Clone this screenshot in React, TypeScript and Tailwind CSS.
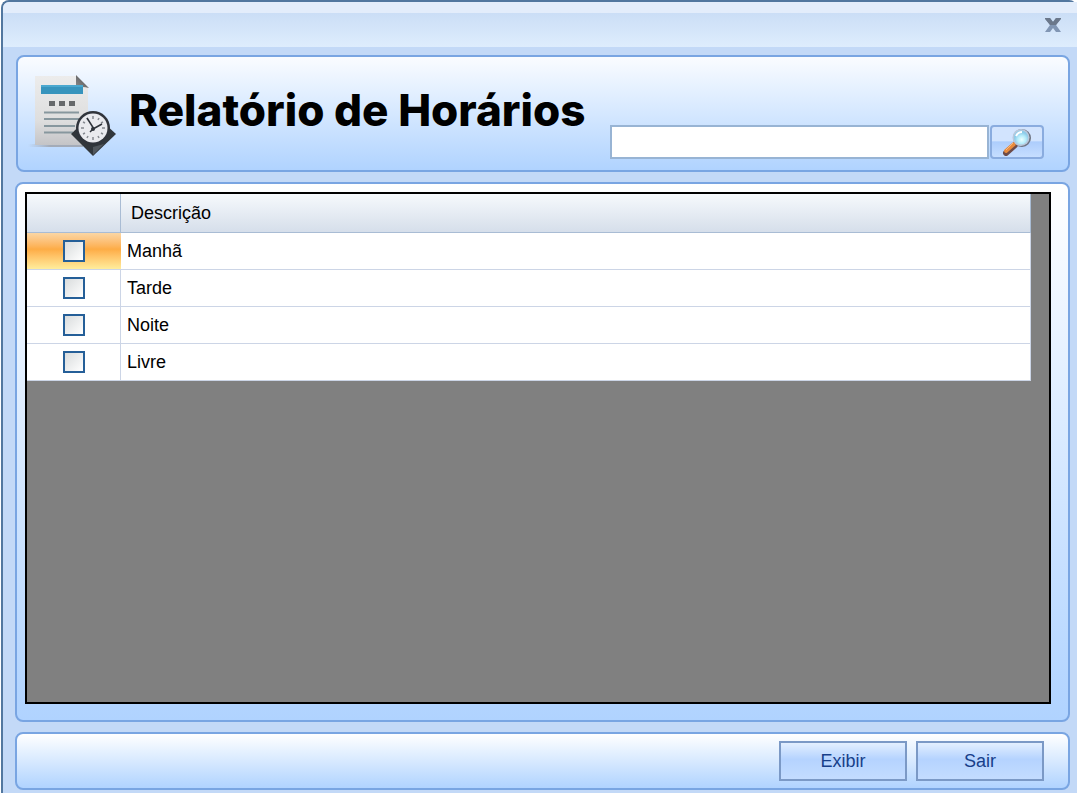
import { useState } from "react";

const schedules = ["Manhã", "Tarde", "Noite", "Livre"];

function ReportIcon() {
  return (
    <svg className="mt-1 h-[84px] w-[90px] shrink-0" viewBox="0 0 90 84" aria-hidden="true">
      <defs>
        <linearGradient id="paper" x1="0" y1="0" x2="0" y2="1">
          <stop offset="0" stopColor="#ececec" />
          <stop offset="0.65" stopColor="#dedede" />
          <stop offset="1" stopColor="#c4c4c7" />
        </linearGradient>
        <linearGradient id="floor" x1="0" y1="0" x2="1" y2="0">
          <stop offset="0" stopColor="#a9b3c2" stopOpacity="0" />
          <stop offset="0.4" stopColor="#a3abb8" />
        </linearGradient>
        <linearGradient id="fold" x1="0" y1="1" x2="1" y2="0">
          <stop offset="0" stopColor="#8b8b8b" />
          <stop offset="1" stopColor="#4b4b4e" />
        </linearGradient>
      </defs>
      <path d="M0 70h55v3H0z" fill="url(#floor)" />
      <path d="M7 2h42l11 12v57H7z" fill="url(#paper)" />
      <path d="M48 1l13 13q-7-2-13 0z" fill="url(#fold)" />
      <path d="M13 11h42v9H13z" fill="#3794bd" />
      <path d="M13 11h42v2H13z" fill="#4ba8cf" />
      <path d="M21 27h6v5h-6zM31 27h6v5h-6zM41 27h6v5h-6z" fill="#66696b" />
      <path d="M16 38.500h35M16 45h35M16 52h31M16 58.500h29" stroke="#87979e" strokeWidth="2" />
      <path d="M65 39l23 21-23 22-22-22z" fill="#31363b" />
      <path d="M65 73l11-3-11 11z" fill="#51575d" />
      <circle cx="65" cy="54" r="17" fill="#30343b" />
      <circle cx="65" cy="54" r="14.500" fill="#e9eaee" />
      <path
        d="M65 42v3M65 63v3M53 54h3M74 54h3M59 44l1 2M71 44l-1 2M55 48l2 1M75 48l-2 1M55 60l2-1M75 60l-2-1M59 64l1-2M71 64l-1-2"
        stroke="#868a91"
        strokeWidth="1.500"
      />
      <path d="M66 55l-7-11M65 55l9-5M65 55l-3 3" stroke="#2e333a" strokeWidth="1.500" fill="none" />
      <circle cx="65" cy="55" r="2" fill="#2e333a" />
    </svg>
  );
}

function SearchIcon() {
  return (
    <svg className="h-7 w-7" viewBox="0 0 28 28" aria-hidden="true">
      <defs>
        <radialGradient id="lens" cx="0.55" cy="0.65">
          <stop offset="0" stopColor="#edffff" />
          <stop offset="0.6" stopColor="#b4ebfa" />
          <stop offset="1" stopColor="#8dccea" />
        </radialGradient>
      </defs>
      <path d="M13 15l-3 3" stroke="#8e939f" strokeWidth="3" />
      <path d="M12 17l-9 8" stroke="#6d4b49" strokeWidth="6" strokeLinecap="round" />
      <path d="M11 16l-8 7" stroke="#e98b3d" strokeWidth="4" strokeLinecap="round" />
      <path d="M10 15l-7 7" stroke="#f8b77a" strokeWidth="1" />
      <circle cx="19" cy="10" r="9" fill="#6e7482" />
      <circle cx="18" cy="9.500" r="8.500" fill="#bac8dc" />
      <circle cx="18" cy="9.500" r="7" fill="url(#lens)" />
      <path d="M13 8q2-4 6-4" stroke="#fff" strokeWidth="2" fill="none" />
    </svg>
  );
}

function CloseIcon() {
  return (
    <svg className="h-4 w-4" viewBox="0 0 16 16" aria-hidden="true">
      <path d="M0 1h5l3 4 3-4h5l-5 7 5 7h-5l-3-4-3 4H0l5-7z" fill="#8196b4" />
      <path d="M0 1h5l3 4 3-4h5v1l-5 6H5L0 2z" fill="#6b788b" />
    </svg>
  );
}

function FooterButton({ label }: { label: string }) {
  return (
    <button
      type="button"
      className="h-10 w-32 border-2 border-[#7b99c6] bg-linear-to-b from-[#e3efff] from-0% via-[#b5d3ff] via-45% to-[#c3dcff] text-lg text-[#173f8a]"
    >
      {label}
    </button>
  );
}

export default function App() {
  const [search, setSearch] = useState("");
  const [checked, setChecked] = useState<string[]>([]);

  const toggle = (name: string) => {
    setChecked((prev) => (prev.includes(name) ? prev.filter((n) => n !== name) : [...prev, name]));
  };

  return (
    <div className="min-h-screen bg-white pb-[3px] pl-px font-['Liberation_Sans',Arial,sans-serif] flex flex-col">
      <div className="flex flex-1 flex-col rounded-t-lg border-t-2 border-l-2 border-[#52779f] bg-[#c3d9f7]">
        <div className="flex h-[45px] shrink-0 items-center justify-end rounded-tl-md bg-linear-to-b from-[#e3edfb] from-25% via-[#cbdef6] via-25% to-[#deedfd] pr-4">
          <button type="button" aria-label="Fechar">
            <CloseIcon />
          </button>
        </div>

        <div className="flex flex-1 flex-col pt-2 pr-[7px] pb-[3px] pl-3">
          <header className="ml-px flex h-[117px] shrink-0 items-center rounded-lg border-2 border-[#79a5e2] bg-linear-to-b from-[#fafcff] to-[#b0d3ff] pr-6 pl-2.5">
            <ReportIcon />
            <h1 className="mb-2 ml-[11px] whitespace-nowrap font-['Inter',sans-serif] text-[44px] leading-none font-extrabold text-black">
              Relatório de Horários
            </h1>
            <form
              className="mt-14 ml-auto flex w-[434px] gap-px"
              onSubmit={(e) => e.preventDefault()}
            >
              <input
                type="text"
                aria-label="Pesquisar"
                value={search}
                onChange={(e) => setSearch(e.target.value)}
                className="h-[34px] min-w-0 flex-1 border-2 border-[#98b4d4] bg-white px-2 text-lg outline-none"
              />
              <button
                type="submit"
                aria-label="Buscar"
                className="flex h-[34px] w-[54px] items-center justify-center rounded-sm border-2 border-[#8aacdf] bg-linear-to-b from-[#d2e4fe] from-45% via-[#adcdfc] via-50% to-[#c6deff]"
              >
                <SearchIcon />
              </button>
            </form>
          </header>

          <main className="mt-2.5 flex flex-1 flex-col rounded-lg border-2 border-[#79a5e2] bg-linear-to-b from-white to-[#b0d3ff] pt-2 pr-[17px] pb-4 pl-2">
            <div className="flex-1 border-2 border-black bg-[#808080] pr-[18px]">
              <table className="w-full border-separate border-spacing-0 text-lg leading-none text-black">
                <thead>
                  <tr className="h-[39px] bg-linear-to-b from-[#f6f9fc] to-[#d5deea]">
                    <th className="w-[94px] border-r border-b border-[#a9bcd4]" aria-label="Selecionar" />
                    <th className="border-r border-b border-[#a9bcd4] pl-2.5 text-left font-normal">Descrição</th>
                  </tr>
                </thead>
                <tbody>
                  {schedules.map((name, i) => (
                    <tr key={name} className="h-[37px] bg-white">
                      <td
                        className={
                          i === 0
                            ? "border-b border-[#ccd5e6] bg-linear-to-b from-[#fbd6a4] via-[#fdac45] via-45% to-[#ffed9c] pr-px"
                            : "border-r border-b border-[#ccd5e6]"
                        }
                      >
                        <input
                          type="checkbox"
                          id={`schedule-${i}`}
                          checked={checked.includes(name)}
                          onChange={() => toggle(name)}
                          className="mx-auto block h-[22px] w-[22px] appearance-none border-2 border-[#255f98] bg-linear-to-br from-[#d9dcdd] to-white checked:from-[#5b8fc7] checked:to-[#255f98]"
                        />
                      </td>
                      <td className="border-r border-b border-[#ccd5e6] pl-1.5">
                        <label htmlFor={`schedule-${i}`}>{name}</label>
                      </td>
                    </tr>
                  ))}
                </tbody>
              </table>
            </div>
          </main>

          <footer className="mt-2.5 flex h-[58px] shrink-0 items-center justify-end gap-[9px] rounded-lg border-2 border-[#79a5e2] bg-linear-to-b from-white to-[#b0d3ff] pr-6">
            <FooterButton label="Exibir" />
            <FooterButton label="Sair" />
          </footer>
        </div>
      </div>
    </div>
  );
}
